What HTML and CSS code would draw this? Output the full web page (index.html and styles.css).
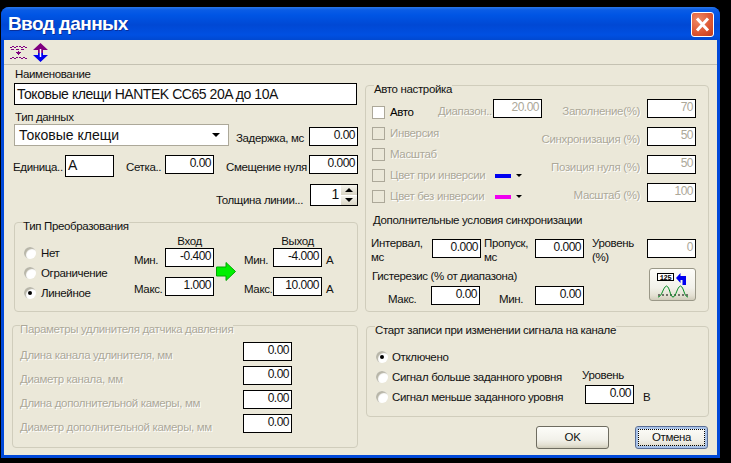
FILE: index.html
```html
<!DOCTYPE html>
<html>
    <head>
        <title>Ввод данных</title>
        <link rel="stylesheet" href="styles.css">
    </head>
    <body>
        <div class="window">
            <div class="titlebar">
                <span class="title">Ввод данных</span>
                <div class="close">
                    <svg width="23" height="25" viewBox="0 0 23 25"><path d="M6 6.500 17 18.500M17 6.500 6 18.500" stroke="#fff" stroke-width="3" fill="none"/></svg>
                </div>
            </div>
            <div class="client">
                <div class="toolbar">
                    <svg class="tool" width="17" height="17" viewBox="0 0 17 17" shape-rendering="crispEdges">
                        <path d="M0 3h2v1H0zM2 2h2v1H2zM4 3h2v1H4zM6 2h2v1H6zM9 2h2v1H9zM11 3h2v1h-2zM13 2h2v1h-2zM15 3h2v1h-2zM1 5h3v1H1zM6 5h3v1H6zM11 5h3v1h-3zM8 7h1v4H8zM6 8h5v1H6zM7 9h3v1H7zM8 10h1v1H8zM0 14h2v1H0zM2 13h2v1H2zM4 14h2v1H4zM6 13h2v1H6zM9 13h2v1H9zM11 14h2v1h-2zM13 13h2v1h-2zM15 14h2v1h-2z" fill="#800080"/>
                    </svg>
                    <svg class="tool" width="15" height="19" viewBox="0 0 15 19">
                        <path d="M7.500 0 15 7H10V10H5V7H0z" fill="#800080"/>
                        <path d="M0 12H5V10H10V12H15L7.500 19z" fill="#0000f0"/>
                        <path d="M7.500 6V14" stroke="#fff" stroke-width="1.500"/>
                    </svg>
                </div>
                <div class="panels">
                    <div class="col-left">
                        <div class="caption">Наименование</div>
                        <div class="name-box">Токовые клещи HANTEK CC65 20A до 10A</div>
                        <div class="caption type-caption">Тип данных</div>
                        <div class="row type-row">
                            <div class="select">
                                <span>Токовые клещи</span>
                                <i class="caret"></i>
                            </div>
                            <span class="label delay-label">Задержка, мс</span>
                            <div class="num">0.00</div>
                        </div>
                        <div class="row unit-row">
                            <span class="label unit-label">Единица..</span>
                            <div class="num tall left">A</div>
                            <span class="label grid-label">Сетка..</span>
                            <div class="num">0.00</div>
                            <span class="label zero-label">Смещение нуля</span>
                            <div class="num">0.000</div>
                        </div>
                        <div class="row width-row">
                            <span class="label">Толщина линии...</span>
                            <div class="spinner">
                                <span class="spin-value">1</span>
                                <div class="spin-btns">
                                    <div class="spin-btn"><i class="caret up"></i></div>
                                    <div class="spin-btn"><i class="caret"></i></div>
                                </div>
                            </div>
                        </div>

                        <div class="group convert-group">
                            <div class="group-title">Тип Преобразования</div>
                            <div class="convert-body">
                                <div class="radios">
                                    <div class="radio-row"><i class="radio"></i>Нет</div>
                                    <div class="radio-row"><i class="radio"></i>Ограничение</div>
                                    <div class="radio-row"><i class="radio on"></i>Линейное</div>
                                </div>
                                <div class="convert-grid">
                                    <span></span><span class="head">Вход</span><span></span><span></span><span class="head">Выход</span><span></span>
                                    <span class="label">Мин.</span>
                                    <div class="num">-0.400</div>
                                    <svg class="arrow" width="20" height="19" viewBox="0 0 20 19">
                                        <path d="M.500 5H10V.500L19.500 9.500 10 18.500V14H.500z" fill="#00f000" stroke="#00a800"/>
                                    </svg>
                                    <span class="label">Мин.</span>
                                    <div class="num">-4.000</div>
                                    <span class="label unit">A</span>
                                    <span class="label">Макс.</span>
                                    <div class="num">1.000</div>
                                    <span class="label">Макс.</span>
                                    <div class="num">10.000</div>
                                    <span class="label unit">A</span>
                                </div>
                            </div>
                        </div>

                        <div class="group ext-group off">
                            <div class="group-title">Параметры удлинителя датчика давления</div>
                            <div class="ext-row first">
                                <span class="label">Длина канала удлинителя, мм</span>
                                <div class="num">0.00</div>
                            </div>
                            <div class="ext-row">
                                <span class="label">Диаметр канала, мм</span>
                                <div class="num">0.00</div>
                            </div>
                            <div class="ext-row">
                                <span class="label">Длина дополнительной камеры, мм</span>
                                <div class="num">0.00</div>
                            </div>
                            <div class="ext-row">
                                <span class="label">Диаметр дополнительной камеры, мм</span>
                                <div class="num">0.00</div>
                            </div>
                        </div>
                    </div>

                    <div class="col-right">
                        <div class="group auto-group">
                            <div class="group-title">Авто настройка</div>
                            <div class="auto-top">
                                <div class="checks">
                                    <div class="check-first">
                                        <i class="check live"></i><span class="check-text">Авто</span>
                                        <span class="label range-label off">Диапазон..</span>
                                        <div class="num dim">20.00</div>
                                    </div>
                                    <div class="check-row off"><i class="check"></i>Инверсия</div>
                                    <div class="check-row off"><i class="check"></i>Масштаб</div>
                                    <div class="check-row off">
                                        <i class="check"></i><span class="color-text">Цвет при инверсии</span>
                                        <i class="swatch blue"></i><i class="caret small"></i>
                                    </div>
                                    <div class="check-row off">
                                        <i class="check"></i><span class="color-text">Цвет без инверсии</span>
                                        <i class="swatch pink"></i><i class="caret small"></i>
                                    </div>
                                </div>
                                <div class="percents off">
                                    <div class="percent-row"><span>Заполнение(%)</span><div class="num dim">70</div></div>
                                    <div class="percent-row"><span>Синхронизация (%)</span><div class="num dim">50</div></div>
                                    <div class="percent-row"><span>Позиция нуля (%)</span><div class="num dim">50</div></div>
                                    <div class="percent-row"><span>Масштаб (%)</span><div class="num dim">100</div></div>
                                </div>
                            </div>
                            <div class="sync-caption">Дополнительные условия синхронизации</div>
                            <div class="sync-row">
                                <span class="two-line interval-label">Интервал, мс</span>
                                <div class="num">0.000</div>
                                <span class="two-line skip-label">Пропуск, мс</span>
                                <div class="num">0.000</div>
                                <span class="two-line level-label">Уровень (%)</span>
                                <div class="num dim">0</div>
                            </div>
                            <div class="hyst">
                                <div>
                                    <div class="hyst-caption">Гистерезис (% от диапазона)</div>
                                    <div class="row">
                                        <span class="label max-label">Макс.</span>
                                        <div class="num">0.00</div>
                                        <span class="label min-label">Мин.</span>
                                        <div class="num">0.00</div>
                                    </div>
                                </div>
                                <div class="btn icon-btn">
                                    <svg width="32" height="27" viewBox="0 0 32 27">
                                        <rect x=".500" y="2.500" width="16" height="7" fill="#fff" stroke="#000"/>
                                        <text x="8.500" y="8.500" class="btn-digits" text-anchor="middle">125</text>
                                        <path d="M19 7 23.500 2V5H29V14H25.500V9H23.500V12z" fill="#0000f0"/>
                                        <path d="M1 24H15M17 24H31" stroke="#000" stroke-dasharray="2 2" fill="none"/>
                                        <path d="M1 26C5 26 6 16 9.500 15 13 16 13 26 16 26 19 26 20 16 23.500 15 27 16 27 26 31 26" stroke="#008a20" fill="none"/>
                                    </svg>
                                </div>
                            </div>
                        </div>

                        <div class="group start-group">
                            <div class="group-title">Старт записи при изменении сигнала на канале</div>
                            <div class="start-body">
                                <div class="start-radios">
                                    <div class="radio-row"><i class="radio on"></i>Отключено</div>
                                    <div class="radio-row"><i class="radio"></i>Сигнал больше заданного уровня</div>
                                    <div class="radio-row"><i class="radio"></i>Сигнал меньше заданного уровня</div>
                                </div>
                                <div class="start-level">
                                    <span class="label level-head">Уровень</span>
                                    <div class="row">
                                        <div class="num">0.00</div>
                                        <span class="label volts">В</span>
                                    </div>
                                </div>
                            </div>
                        </div>

                        <div class="footer">
                            <div class="btn">OK</div>
                            <div class="btn focus"><span class="focus-inner">Отмена</span></div>
                        </div>
                    </div>
                </div>
            </div>
        </div>
    </body>
</html>
```

FILE: styles.css
```css
* {
    box-sizing: border-box;
}
body {
    margin: 0;
    height: 463px;
    overflow: hidden;
    background-color: black;
    font-family: "Liberation Sans", Arial, sans-serif;
    font-size: 11.5px;
    letter-spacing: -0.35px;
    line-height: 13px;
    color: #111;
    white-space: nowrap;
}
i {
    display: block;
}
.window {
    width: 719px;
    height: 451px;
    margin: 7px 0 0 1px;
    display: flex;
    flex-direction: column;
    border-radius: 8px 8px 0 0;
    background-color: #0048d8;
}
.titlebar {
    height: 33px;
    flex: none;
    display: flex;
    justify-content: space-between;
    padding: 5px 6px 0 6px;
    border-radius: 8px 8px 0 0;
    background: linear-gradient(#2a78e8 0, #0a5ce6 3px, #0055e4 8px, #0048d4 18px, #0050e2 28px, #0048d0 33px);
}
.title {
    padding-left: 1px;
    font-weight: bold;
    font-size: 19px;
    letter-spacing: -0.6px;
    line-height: 24px;
    color: white;
    text-shadow: 1px 1px 0 #0a2f9a;
}
.close {
    width: 23px;
    height: 25px;
    display: flex;
    border: 1px solid white;
    border-radius: 3px;
    background: radial-gradient(circle at 30% 30%, #ee8a66, #dc5530 60%, #c0391c);
}
.close svg {
    margin: -1px;
    flex: none;
}
.client {
    flex: 1;
    margin: 0 3px 3px 3px;
    background-color: #ebe8d9;
}
.toolbar {
    height: 25px;
    display: flex;
    gap: 6px;
    align-items: center;
    padding-left: 6px;
    border-bottom: 1px solid #c4c1b2;
}
.panels {
    display: flex;
    gap: 7px;
    padding-left: 10px;
}
.col-left {
    width: 344px;
    padding-top: 3px;
}
.col-right {
    width: 344px;
    padding-top: 20px;
}
.row {
    display: flex;
}
.caption {
    padding-left: 1px;
}
.name-box {
    width: 343px;
    height: 22px;
    margin-top: 2px;
    padding: 1px 2px;
    border: 1px solid black;
    background-color: white;
    font-size: 14px;
    letter-spacing: -0.45px;
    line-height: 19px;
}
.type-caption {
    margin-top: 6px;
}
.type-row {
    height: 22px;
    align-items: flex-end;
}
.select {
    width: 215px;
    height: 22px;
    display: flex;
    align-items: center;
    justify-content: space-between;
    padding: 0 8px 0 4px;
    border: 1px solid #aca899;
    background-color: white;
    font-size: 14px;
    letter-spacing: 0;
    margin-right: auto;
    align-self: flex-start;
}
.caret {
    width: 0;
    height: 0;
    border-left: 4px solid transparent;
    border-right: 4px solid transparent;
    border-top: 4px solid black;
}
.caret.up {
    border-top: 0;
    border-bottom: 4px solid black;
}
.caret.small {
    border-left-width: 3px;
    border-right-width: 3px;
    border-top-width: 3px;
}
.num {
    width: 49px;
    height: 19px;
    flex: none;
    padding-right: 2px;
    border: 1px solid black;
    background-color: white;
    text-align: right;
    font-size: 12px;
    letter-spacing: -0.5px;
    line-height: 15px;
}
.num.dim {
    color: #aca899;
}
.num.left {
    text-align: left;
    padding: 2px 0 0 2px;
    font-size: 14px;
}
.num.tall {
    height: 22px;
}
.label {
    flex: none;
}
.delay-label {
    margin-right: 5px;
    padding-bottom: 1px;
}
.unit-row {
    margin-top: 9px;
    height: 22px;
}
.unit-row .label {
    padding-top: 6px;
}
.unit-label {
    width: 52px;
    margin-left: -1px;
}
.grid-label {
    width: 39px;
    margin-left: 12px;
}
.zero-label {
    width: 83px;
    margin-left: 12px;
}
.width-row {
    margin-top: 7px;
    height: 22px;
    justify-content: flex-end;
}
.width-row .label {
    padding-top: 10px;
    margin-right: 7px;
}
.spinner {
    width: 48px;
    height: 22px;
    display: flex;
    justify-content: space-between;
    border: 1px solid black;
    background-color: white;
}
.spin-value {
    flex: 1;
    text-align: right;
    padding-right: 2px;
    font-size: 14px;
    line-height: 19px;
}
.spin-btns {
    width: 16px;
    display: flex;
    flex-direction: column;
    gap: 1px;
}
.spin-btn {
    flex: 1;
    display: flex;
    align-items: center;
    justify-content: center;
    background: linear-gradient(#f6f5ee, #d8d4c4);
}
.group {
    border: 1px solid #d0cdbc;
    border-radius: 4px;
}
.group-title {
    width: fit-content;
    margin: -3px 0 0 8px;
    background-color: #ebe8d9;
}
.convert-group {
    height: 90px;
    margin-top: 16px;
}
.convert-body {
    display: flex;
    padding: 2px 0 0 9px;
}
.radios {
    width: 110px;
    padding-top: 8px;
}
.radio-row {
    height: 20px;
    display: flex;
    align-items: center;
    gap: 5px;
}
.radio {
    width: 12px;
    height: 12px;
    flex: none;
    display: flex;
    align-items: center;
    justify-content: center;
    border-radius: 50%;
    background-color: white;
    box-shadow: inset 2px 2px 1px #b8b6a8;
}
.radio.on::after {
    content: "";
    width: 4px;
    height: 4px;
    border-radius: 50%;
    background-color: black;
}
.convert-grid {
    display: grid;
    grid-template-columns: 31px 49px 30px 29px 49px 18px;
    grid-template-rows: 13px 29px 19px;
}
.convert-grid .label {
    padding-top: 6px;
}
.convert-grid .unit {
    padding-left: 4px;
}
.head {
    text-align: center;
}
.arrow {
    grid-column: 3;
    grid-row: 2 / span 2;
    margin: 14px 0 0 2px;
}
.ext-group {
    width: 346px;
    height: 123px;
    margin: 13px 0 0 -2px;
}
.ext-group .group-title {
    margin-left: 7px;
}
.off,
.off .label {
    color: #aca899;
    text-shadow: 1px 1px 0 white;
}
.off .num {
    text-shadow: none;
}
.off .num:not(.dim) {
    color: #111;
}
.ext-row {
    height: 19px;
    margin-top: 5px;
    display: flex;
    padding-left: 7px;
}
.ext-row.first {
    margin-top: 6px;
}
.ext-row .label {
    width: 223px;
    padding-top: 7px;
}
.auto-group {
    height: 227px;
}
.auto-top {
    display: flex;
    margin-top: 3px;
    padding-left: 6px;
}
.checks {
    width: 170px;
    flex: none;
}
.check-first {
    height: 20px;
    display: flex;
    align-items: flex-end;
    margin-bottom: 8px;
}
.check-first .num {
    align-self: flex-start;
}
.check {
    width: 13px;
    height: 13px;
    flex: none;
    border: 1px solid #aca899;
}
.check.live {
    background-color: white;
}
.check-text {
    width: 53px;
    padding-left: 5px;
    color: #000;
}
.range-label {
    width: 55px;
    padding-bottom: 1px;
}
.check-row {
    height: 13px;
    margin-bottom: 8px;
    display: flex;
    align-items: center;
    gap: 5px;
}
.color-text {
    width: 100px;
}
.swatch {
    width: 16px;
    height: 4px;
    margin-top: 1px;
}
.swatch.blue {
    background-color: #0000f0;
}
.swatch.pink {
    background-color: #f000f0;
}
.percents {
    flex: 1;
    min-width: 0;
    padding-right: 12px;
}
.percent-row {
    display: flex;
    justify-content: flex-end;
    align-items: flex-end;
    gap: 7px;
    margin-bottom: 9px;
}
.sync-caption {
    margin: 3px 0 0 7px;
}
.sync-row {
    display: flex;
    height: 19px;
    margin: 12px 0 0 5px;
}
.two-line {
    flex: none;
    white-space: normal;
    line-height: 14px;
    margin-top: -3px;
    height: 28px;
}
.interval-label {
    width: 61px;
}
.skip-label {
    width: 51px;
    margin-left: 3px;
}
.level-label {
    width: 55px;
    margin-left: 8px;
    padding-right: 8px;
}
.hyst {
    display: flex;
    justify-content: space-between;
    padding: 10px 12px 0 6px;
}
.hyst-caption {
    margin-top: 2px;
    margin-bottom: 3px;
}
.hyst .row .label {
    padding-top: 7px;
}
.max-label {
    width: 59px;
    padding-left: 16px;
}
.min-label {
    width: 55px;
    padding-left: 19px;
}
.btn {
    width: 73px;
    height: 23px;
    display: flex;
    align-items: center;
    justify-content: center;
    border: 1px solid #6e6c60;
    border-radius: 3px;
    background: linear-gradient(#fdfdf9 0, #f2f1ea 60%, #e4e1d3 85%, #d0ccba 100%);
}
.icon-btn {
    width: 47px;
    height: 33px;
    border-color: #9a9888;
}
.btn-digits {
    font-family: "Liberation Mono", monospace;
    font-size: 7px;
    font-weight: bold;
}
.focus {
    border-color: #5a6e96;
    box-shadow: inset 0 0 0 2px #a9c3e8;
}
.focus-inner {
    width: 67px;
    height: 17px;
    text-align: center;
    line-height: 15px;
    border: 1px dotted black;
}
.start-group {
    width: 343px;
    height: 91px;
    margin: 14px 0 0 1px;
}
.start-body {
    display: flex;
    padding: 10px 0 0 9px;
}
.start-radios {
    width: 206px;
}
.start-radios .radio-row {
    gap: 4px;
}
.level-head {
    display: block;
    margin-top: 13px;
    margin-bottom: 3px;
}
.start-level {
    padding-top: 9px;
}
.start-level .row {
    padding-left: 3px;
}
.volts {
    margin-left: 9px;
    padding-top: 6px;
}
.footer {
    display: flex;
    justify-content: flex-end;
    gap: 26px;
    margin-top: 9px;
    padding-right: 1px;
}
```
